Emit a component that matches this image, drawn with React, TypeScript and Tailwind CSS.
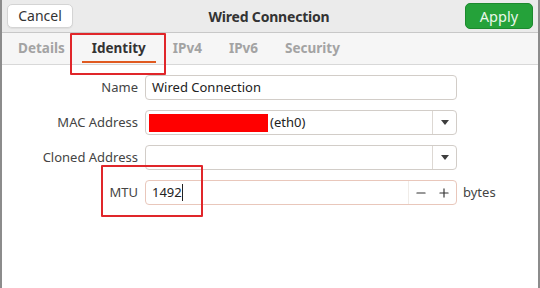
import { Minus, Plus } from "lucide-react";

const tabs = ["Details", "Identity", "IPv4", "IPv6", "Security"];

function Arrow() {
  return (
    <svg width="8" height="5" viewBox="0 0 8 5">
      <path d="M0 0 L8 0 L4 5 Z" fill="#3d3d3d" />
    </svg>
  );
}

export default function App() {
  return (
    <div
      className="relative w-[540px] h-[288px] overflow-hidden bg-white text-[#3d3d3d] border-x-2 border-[#8c8c8c]"
      style={{ fontFamily: '"Noto Sans", "Open Sans", sans-serif' }}
    >
      {/* Header bar */}
      <div className="flex items-center justify-between h-[33px] px-[5px] bg-[#ebebeb] border-b border-[#c8c8c8]">
        <button className="w-[66px] h-[24px] rounded-[5px] bg-white border border-[#d4d4d4] text-[14px] text-[#333] leading-none shadow-[0_1px_1px_rgba(0,0,0,0.06)]">
          Cancel
        </button>
        <span className="text-[14px] font-bold text-[#333] tracking-[-0.2px]">Wired Connection</span>
        <button className="w-[68px] h-[26px] rounded-[5px] bg-[#25a23a] border border-[#1c8a2e] text-[14.5px] text-[#eaf7ea] leading-none">
          Apply
        </button>
      </div>

      {/* Tabs */}
      <div className="flex items-stretch h-[32px] px-[6px] gap-[7px] bg-[#f6f6f6] border-b border-[#d8d8d8]">
        {tabs.map((t) => (
          <div
            key={t}
            className={`relative flex items-center px-[10px] text-[13.5px] font-bold ${
              t === "Identity" ? "text-[#333]" : "text-[#a3a3a3]"
            }`}
          >
            {t}
            {t === "Identity" && (
              <span className="absolute left-0 right-0 bottom-[1px] h-[2px] bg-[#e05a20]" />
            )}
          </div>
        ))}
      </div>

      {/* Form */}
      <div className="grid grid-cols-[136px_312px_auto] gap-x-[7px] gap-y-[10px] items-center pt-[10px] text-[13px]">
        <span className="text-right text-[#444]">Name</span>
        <div className="h-[25px] flex items-center px-[6px] rounded-[4px] border border-[#d2cdc8] bg-white text-[#222]">
          Wired Connection
        </div>
        <span />

        <span className="text-right text-[#444]">MAC Address</span>
        <div className="h-[25px] flex items-stretch rounded-[4px] border border-[#d2cdc8] bg-white text-[#222]">
          <div className="flex-1 flex items-center pl-[3px]">
            <span className="w-[119px] h-[18px] bg-[#ff0000]" />
            <span className="ml-[2px]">(eth0)</span>
          </div>
          <div className="w-[24px] flex items-center justify-center border-l border-[#ddd8d3]">
            <Arrow />
          </div>
        </div>
        <span />

        <span className="text-right text-[#444]">Cloned Address</span>
        <div className="h-[25px] flex items-stretch rounded-[4px] border border-[#d2cdc8] bg-white">
          <div className="flex-1" />
          <div className="w-[24px] flex items-center justify-center border-l border-[#ddd8d3]">
            <Arrow />
          </div>
        </div>
        <span />

        <span className="text-right text-[#444]">MTU</span>
        <div className="h-[25px] flex items-stretch rounded-[4px] border border-[#e9c7bb] bg-white text-[#222]">
          <div className="flex-1 flex items-center pl-[6px]">
            1492<span className="w-px h-[17px] bg-[#222]" />
          </div>
          <div className="w-[24px] flex items-center justify-center border-l border-[#f0ece8]">
            <Minus size={14} strokeWidth={2} color="#333" />
          </div>
          <div className="w-[24px] flex items-center justify-center">
            <Plus size={14} strokeWidth={2} color="#333" />
          </div>
        </div>
        <span className="text-[#444] -ml-[1px]">bytes</span>
      </div>

      {/* Annotations */}
      <div className="absolute left-[68px] top-[33px] w-[96px] h-[42px] border-2 border-[#e0262a] rounded-[1px]" />
      <div className="absolute left-[99px] top-[165px] w-[102px] h-[52px] border-2 border-[#e0262a] rounded-[1px]" />
    </div>
  );
}
